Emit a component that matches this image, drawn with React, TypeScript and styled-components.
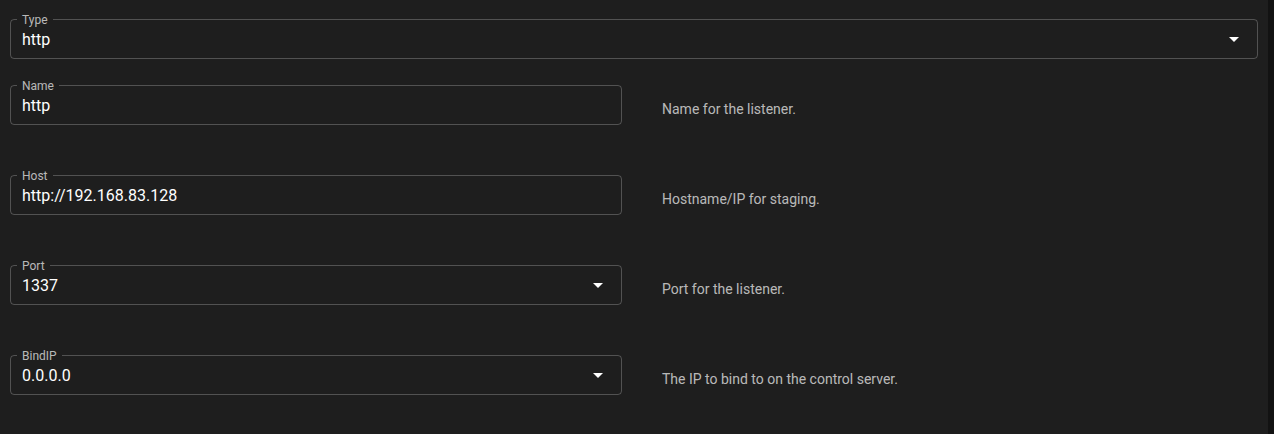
import React from "react";
import styled, { createGlobalStyle } from "styled-components";

const Global = createGlobalStyle`
  html, body { margin: 0; padding: 0; background: #121212; }
  body { font-family: Roboto, "Noto Sans", "Liberation Sans", sans-serif; }
  * { box-sizing: border-box; }
`;

const Page = styled.div`
  width: 1268px;
  min-height: 434px;
  background: #1e1e1e;
  padding: 19px 10px 20px 10px;
  display: flex;
  flex-direction: column;
`;

const Row = styled.div<{ $top: number }>`
  display: grid;
  grid-template-columns: 612px 1fr;
  column-gap: 40px;
  align-items: center;
  margin-top: ${(p) => p.$top}px;
`;

const Field = styled.div<{ $full?: boolean }>`
  position: relative;
  height: 40px;
  width: ${(p) => (p.$full ? "1248px" : "612px")};
  border: 1px solid rgba(255, 255, 255, 0.23);
  border-radius: 4px;
  display: flex;
  align-items: center;
  padding: 0 11px;
`;

const Label = styled.span`
  position: absolute;
  top: -6px;
  left: 6px;
  padding: 0 5px;
  background: #1e1e1e;
  color: rgba(255, 255, 255, 0.7);
  font-size: 12px;
  line-height: 12px;
`;

const Value = styled.span`
  color: #ffffff;
  font-size: 16px;
  line-height: 23px;
  flex: 1;
`;

const Arrow = styled.svg`
  position: absolute;
  right: 11px;
  top: calc(50% - 12px);
  width: 24px;
  height: 24px;
  fill: #ffffff;
`;

const Helper = styled.span`
  color: rgba(255, 255, 255, 0.7);
  font-size: 14px;
  line-height: 20px;
  padding-top: 7px;
`;

const ArrowIcon = () => (
  <Arrow viewBox="0 0 24 24">
    <path d="M7 10l5 5 5-5z" />
  </Arrow>
);

type Item = { label: string; value: string; helper: string; select?: boolean };

const items: Item[] = [
  { label: "Name", value: "http", helper: "Name for the listener." },
  { label: "Host", value: "http://192.168.83.128", helper: "Hostname/IP for staging." },
  { label: "Port", value: "1337", helper: "Port for the listener.", select: true },
  { label: "BindIP", value: "0.0.0.0", helper: "The IP to bind to on the control server.", select: true },
];

export default function App() {
  return (
    <>
      <Global />
      <Page>
        <Field $full>
          <Label>Type</Label>
          <Value>http</Value>
          <ArrowIcon />
        </Field>
        {items.map((it, i) => (
          <Row key={it.label} $top={i === 0 ? 26 : 50}>
            <Field>
              <Label>{it.label}</Label>
              <Value>{it.value}</Value>
              {it.select && <ArrowIcon />}
            </Field>
            <Helper>{it.helper}</Helper>
          </Row>
        ))}
      </Page>
    </>
  );
}
